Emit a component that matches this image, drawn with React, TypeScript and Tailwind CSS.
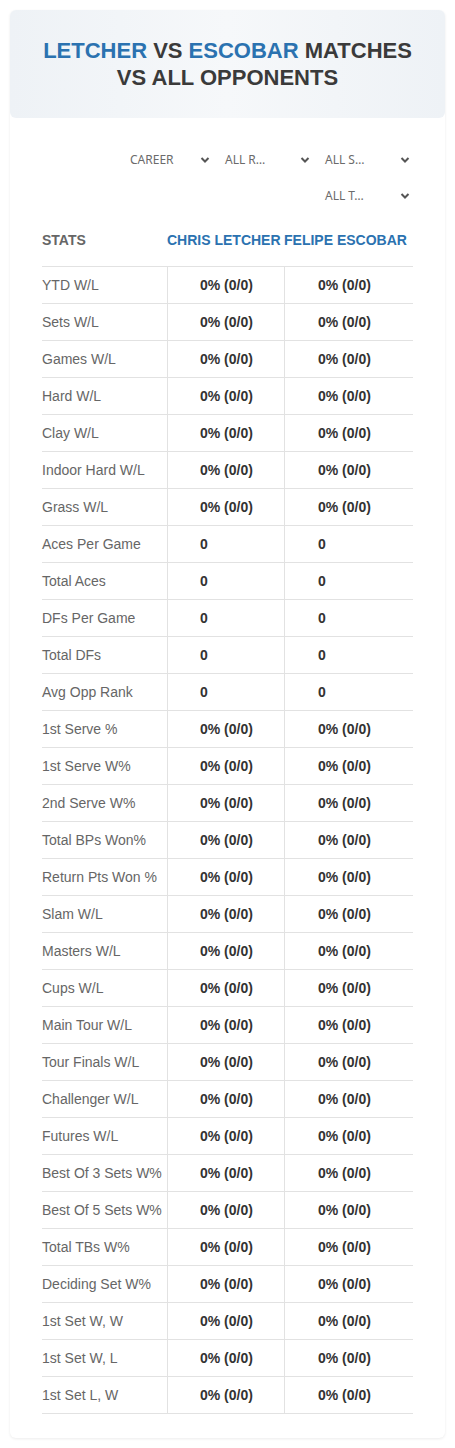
import React from "react";

const rows: [string, string][] = [
  ["YTD W/L", "0% (0/0)"],
  ["Sets W/L", "0% (0/0)"],
  ["Games W/L", "0% (0/0)"],
  ["Hard W/L", "0% (0/0)"],
  ["Clay W/L", "0% (0/0)"],
  ["Indoor Hard W/L", "0% (0/0)"],
  ["Grass W/L", "0% (0/0)"],
  ["Aces Per Game", "0"],
  ["Total Aces", "0"],
  ["DFs Per Game", "0"],
  ["Total DFs", "0"],
  ["Avg Opp Rank", "0"],
  ["1st Serve %", "0% (0/0)"],
  ["1st Serve W%", "0% (0/0)"],
  ["2nd Serve W%", "0% (0/0)"],
  ["Total BPs Won%", "0% (0/0)"],
  ["Return Pts Won %", "0% (0/0)"],
  ["Slam W/L", "0% (0/0)"],
  ["Masters W/L", "0% (0/0)"],
  ["Cups W/L", "0% (0/0)"],
  ["Main Tour W/L", "0% (0/0)"],
  ["Tour Finals W/L", "0% (0/0)"],
  ["Challenger W/L", "0% (0/0)"],
  ["Futures W/L", "0% (0/0)"],
  ["Best Of 3 Sets W%", "0% (0/0)"],
  ["Best Of 5 Sets W%", "0% (0/0)"],
  ["Total TBs W%", "0% (0/0)"],
  ["Deciding Set W%", "0% (0/0)"],
  ["1st Set W, W", "0% (0/0)"],
  ["1st Set W, L", "0% (0/0)"],
  ["1st Set L, W", "0% (0/0)"],
];

function Chevron() {
  return (
    <svg width="10" height="8" viewBox="0 0 10 8" className="shrink-0">
      <polyline points="1.5,2 5,5.5 8.5,2" fill="none" stroke="#555" strokeWidth="2" />
    </svg>
  );
}

function Select({ label, first }: { label: string; first?: boolean }) {
  return (
    <div className={"flex h-[36px] w-[100px] items-center justify-between pr-[15px] " + (first ? "pl-[5px]" : "pl-0")}>
      <span className="text-[12px] text-[#6b6b6b]" style={{ fontFamily: '"Noto Sans", sans-serif' }}>{label}</span>
      <Chevron />
    </div>
  );
}

export default function App() {
  return (
    <div className="min-h-[1448px] bg-white pt-[10px]" style={{ fontFamily: '"Liberation Sans", Arial, sans-serif' }}>
      <div className="mx-[10px] rounded-[6px] bg-white pb-[24px] shadow-[0_1px_3px_rgba(0,0,0,0.08)]">
        <div className="flex h-[108px] flex-col items-center justify-center rounded-[6px] bg-gradient-to-r from-[#eef2f6] via-[#f6f8fa] to-[#eef2f6] text-center">
          <div className="text-[22px] font-bold leading-[27px] text-[#3a3a3a]">
            <span className="text-[#2b72b0]">LETCHER</span> VS <span className="text-[#2b72b0]">ESCOBAR</span> MATCHES
            <br />
            VS ALL OPPONENTS
          </div>
        </div>

        <div className="mt-[24px] flex justify-end pr-[20px]">
          <div className="flex w-[300px] flex-wrap justify-end">
            <Select label="CAREER" first />
            <Select label="ALL R…" />
            <Select label="ALL S…" />
            <Select label="ALL T…" />
          </div>
        </div>

        <div className="mx-[32px] mt-[6px]">
          <div className="grid h-[46px] grid-cols-[125px_117px_129px] items-start pt-[10px] text-[14px] font-bold uppercase">
            <div className="text-[#666]">STATS</div>
            <div className="text-[#2b72b0]">CHRIS LETCHER</div>
            <div className="text-[#2b72b0]">FELIPE ESCOBAR</div>
          </div>
          <div className="border-b border-[#e2e2e2]">
            {rows.map(([label, val]) => (
              <div key={label} className="grid h-[37px] grid-cols-[125px_117px_129px] border-t border-[#e2e2e2] text-[14px]">
                <div className="flex items-center text-[#666]">{label}</div>
                <div className="flex items-center border-l border-[#e2e2e2] pl-[32px] font-bold text-[#333]">{val}</div>
                <div className="flex items-center border-l border-[#e2e2e2] pl-[33px] font-bold text-[#333]">{val}</div>
              </div>
            ))}
          </div>
        </div>
      </div>
    </div>
  );
}
